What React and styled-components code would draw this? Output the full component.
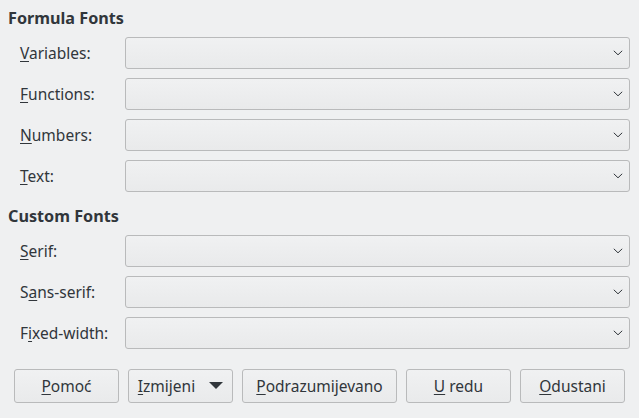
import React from 'react'
import styled, { createGlobalStyle } from 'styled-components'

const Global = createGlobalStyle`
    html, body {
        margin: 0;
        padding: 0;
        background: #eff0f1;
    }
    body {
        font-family: "Noto Sans", "Open Sans", sans-serif;
        font-size: 15.5px;
        color: #31363b;
    }
`

const Dialog = styled.div`
    width: 639px;
    height: 418px;
    box-sizing: border-box;
    padding: 7px 9px 0 8px;
    display: flex;
    flex-direction: column;
`

const Section = styled.div`
    display: flex;
    flex-direction: column;
    margin-bottom: ${p => p.gap || 0}px;
`

const Heading = styled.div`
    font-weight: bold;
    font-size: 16.2px;
    height: 22px;
    line-height: 22px;
    margin-bottom: 8px;
`

const Row = styled.div`
    display: grid;
    grid-template-columns: 105px 1fr;
    align-items: center;
    padding-left: 12px;
    height: 32px;
    margin-bottom: 9px;
`

const Label = styled.label`
    white-space: nowrap;
`

const Mnemonic = styled.span`
    text-decoration: underline;
    text-underline-offset: 2px;
`

const Combo = styled.div`
    height: 32px;
    box-sizing: border-box;
    border: 1px solid #b9babb;
    border-radius: 3px;
    background: linear-gradient(#f0f1f2, #e9eaeb);
    display: flex;
    align-items: center;
    justify-content: flex-end;
    padding-right: 6px;
`

const Buttons = styled.div`
    display: flex;
    gap: 9px;
    padding-left: 6px;
    margin-top: 11px;
`

const Button = styled.button`
    width: ${p => p.w || 105}px;
    height: 34px;
    box-sizing: border-box;
    border: 1px solid #b9babb;
    border-radius: 3px;
    background: linear-gradient(#f0f1f2, #e9eaeb);
    font-family: inherit;
    font-size: 15.5px;
    color: #31363b;
    display: flex;
    align-items: center;
    justify-content: center;
    gap: 14px;
    padding: 0;
`

const Chevron = () => (
    <svg width="10" height="6" viewBox="0 0 10 6">
        <path d="M0.8 0.8 L5 4.8 L9.2 0.8" fill="none" stroke="#31363b" strokeWidth="1" />
    </svg>
)

const Caret = () => (
    <svg width="14" height="8" viewBox="0 0 14 8">
        <path d="M0 0 L14 0 L7 7 Z" fill="#31363b" />
    </svg>
)

const FieldRow = ({ m, rest }) => (
    <Row>
        <Label>
            <Mnemonic>{m}</Mnemonic>
            {rest}
        </Label>
        <Combo>
            <Chevron />
        </Combo>
    </Row>
)

export default function App() {
    return (
        <Dialog>
            <Global />
            <Section gap={4}>
                <Heading>Formula Fonts</Heading>
                <FieldRow m="V" rest="ariables:" />
                <FieldRow m="F" rest="unctions:" />
                <FieldRow m="N" rest="umbers:" />
                <FieldRow m="T" rest="ext:" />
            </Section>
            <Section>
                <Heading>Custom Fonts</Heading>
                <FieldRow m="S" rest="erif:" />
                <Row>
                    <Label>S<Mnemonic>a</Mnemonic>ns-serif:</Label>
                    <Combo><Chevron /></Combo>
                </Row>
                <Row>
                    <Label>F<Mnemonic>i</Mnemonic>xed-width:</Label>
                    <Combo><Chevron /></Combo>
                </Row>
            </Section>
            <Buttons>
                <Button><span><Mnemonic>P</Mnemonic>omoć</span></Button>
                <Button><span><Mnemonic>I</Mnemonic>zmijeni</span><Caret /></Button>
                <Button w={155}><span><Mnemonic>P</Mnemonic>odrazumijevano</span></Button>
                <Button><span><Mnemonic>U</Mnemonic> redu</span></Button>
                <Button><span><Mnemonic>O</Mnemonic>dustani</span></Button>
            </Buttons>
        </Dialog>
    )
}
